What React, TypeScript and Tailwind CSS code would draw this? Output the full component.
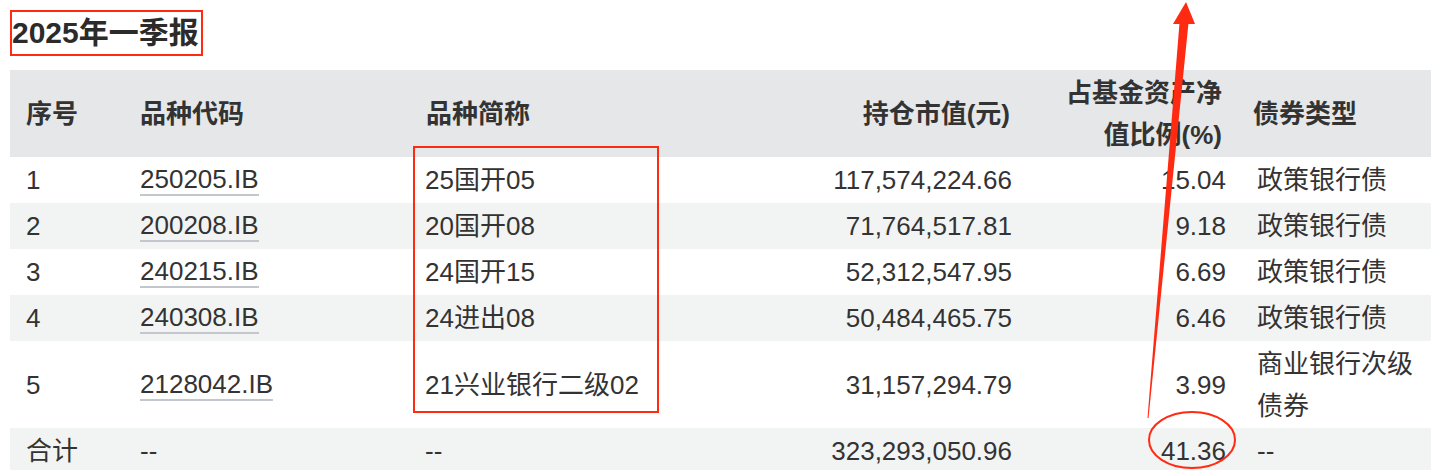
import React from "react";

type Row = {
  no: string;
  code: string;
  name: string;
  value: string;
  pct: string;
  type: string[];
};

const rows: Row[] = [
  { no: "1", code: "250205.IB", name: "25国开05", value: "117,574,224.66", pct: "15.04", type: ["政策银行债"] },
  { no: "2", code: "200208.IB", name: "20国开08", value: "71,764,517.81", pct: "9.18", type: ["政策银行债"] },
  { no: "3", code: "240215.IB", name: "24国开15", value: "52,312,547.95", pct: "6.69", type: ["政策银行债"] },
  { no: "4", code: "240308.IB", name: "24进出08", value: "50,484,465.75", pct: "6.46", type: ["政策银行债"] },
  { no: "5", code: "2128042.IB", name: "21兴业银行二级02", value: "31,157,294.79", pct: "3.99", type: ["商业银行次级", "债券"] },
];

const gridCols = "grid grid-cols-[115px_285px_290px_327px_214px_190px]";

export default function App() {
  return (
    <div
      className="relative w-[1431px] h-[470px] overflow-hidden bg-white text-[#333333]"
      style={{ fontFamily: '"Liberation Sans", "Noto Sans CJK SC", sans-serif' }}
    >
      <div className="pt-[10px] pl-[10px]">
        <div className="inline-flex h-[46px] items-center border-2 border-[#ff2a12] pl-0 pr-[2px]">
          <h2 className="text-[30px] font-bold leading-none text-[#2b2b2b]">2025年一季报</h2>
        </div>
      </div>

      <div className="mt-[14px] ml-[10px] w-[1421px]">
        {/* header */}
        <div className={`${gridCols} h-[87px] bg-[#e6e7e9] text-[26px] font-bold leading-[42px]`}>
          <div className="flex items-center pl-[16px]">序号</div>
          <div className="flex items-center pl-[15px]">品种代码</div>
          <div className="flex items-center pl-[16px]">品种简称</div>
          <div className="flex items-center justify-end pr-[17px]">持仓市值(元)</div>
          <div className="flex items-center justify-end pl-[38px] pr-[19px] text-right">占基金资产净值比例(%)</div>
          <div className="flex items-center pl-[12px]">债券类型</div>
        </div>

        {rows.map((r, i) => (
          <div
            key={r.no}
            className={`${gridCols} text-[26px] leading-[42px] ${i % 2 === 1 ? "bg-[#f2f3f3]" : "bg-white"} ${
              r.type.length > 1 ? "h-[87px]" : "h-[46px]"
            }`}
          >
            <div className="flex items-center pl-[16px]">{r.no}</div>
            <div className="flex items-center pl-[15px]">
              <span className="inline-block border-b-2 border-[#c3c6cd] leading-[30px]">{r.code}</span>
            </div>
            <div className="flex items-center pl-[15px]">{r.name}</div>
            <div className="flex items-center justify-end pr-[15px]">{r.value}</div>
            <div className="flex items-center justify-end pr-[15px]">{r.pct}</div>
            <div className="flex flex-col justify-center pl-[16px]">
              {r.type.map((t) => (
                <span key={t}>{t}</span>
              ))}
            </div>
          </div>
        ))}

        <div className={`${gridCols} h-[46px] bg-[#f2f3f3] text-[26px] leading-[42px]`}>
          <div className="flex items-center pl-[16px]">合计</div>
          <div className="flex items-center pl-[15px]">--</div>
          <div className="flex items-center pl-[15px]">--</div>
          <div className="flex items-center justify-end pr-[15px]">323,293,050.96</div>
          <div className="flex items-center justify-end pr-[15px]">41.36</div>
          <div className="flex items-center pl-[16px]">--</div>
        </div>
      </div>

      {/* annotation: box around names */}
      <div className="pointer-events-none absolute left-[413px] top-[146px] h-[267px] w-[246px] border-2 border-[#ff2a12]" />

      {/* annotation: arrow and ellipse */}
      <svg className="pointer-events-none absolute left-0 top-0" width="1431" height="470" viewBox="0 0 1431 470">
        <polygon points="1147.5,418 1148.5,418 1188.5,23 1179.5,23" fill="#ff2a12" />
        <polygon points="1186,2 1173,24 1195,24" fill="#ff2a12" />
        <ellipse cx="1192" cy="440" rx="43" ry="28" fill="none" stroke="#ff2a12" strokeWidth="2" />
      </svg>
    </div>
  );
}
